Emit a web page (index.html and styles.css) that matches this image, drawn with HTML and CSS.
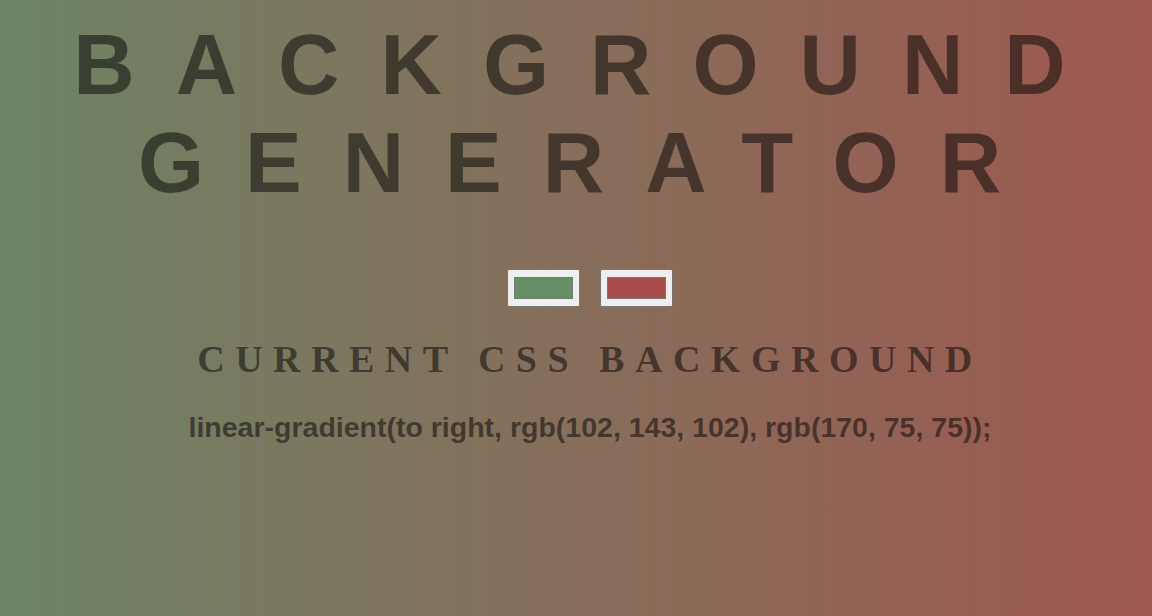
FILE: index.html
```html
<!DOCTYPE html>
<html lang="en">
<head>
<meta charset="utf-8">
<title>Background Generator</title>
<link rel="stylesheet" href="styles.css">
</head>
<body class="page">
  <h1 class="title">BACKGROUND<br>GENERATOR</h1>
  <div class="pickers">
    <input class="picker" type="color" name="color1" value="#668f66">
    <input class="picker" type="color" name="color2" value="#aa4b4b">
  </div>
  <h3 class="subtitle">CURRENT CSS BACKGROUND</h3>
  <p class="code">linear-gradient(to right, rgb(102, 143, 102), rgb(170, 75, 75));</p>
</body>
</html>
```

FILE: styles.css
```css
html {
  height: 100%;
  background: linear-gradient(to right, rgb(109, 131, 101), rgb(135, 110, 90) 50%, rgb(158, 88, 79));
}
.page {
  margin: 0;
  padding: 16px 0 0 28px;
  min-height: 100%;
  box-sizing: border-box;
  text-align: center;
  color: rgba(0, 0, 0, 0.5);
}
.title {
  margin: 0;
  font-family: "Liberation Sans", Arial, sans-serif;
  font-weight: bold;
  font-size: 85px;
  line-height: 98px;
  letter-spacing: 41px;
}
.pickers {
  display: flex;
  justify-content: center;
  gap: 20px;
  margin-top: 57px;
}
.picker {
  -webkit-appearance: none;
  appearance: none;
  width: 73px;
  height: 38px;
  padding: 0;
  margin: 0;
  border: 1px solid #767676;
  border-radius: 2px;
  background: #efefef;
  cursor: pointer;
}
.picker::-webkit-color-swatch-wrapper {
  padding: 7px 6px 7px 6px;
}
.picker::-webkit-color-swatch {
  border: 1px solid #777;
  border-radius: 0;
}
.subtitle {
  margin: 30px 0 0;
  font-family: "Liberation Serif", "Times New Roman", serif;
  font-weight: bold;
  font-size: 38px;
  line-height: 44px;
  letter-spacing: 10.5px;
}
.code {
  margin: 30px 0 0;
  font-family: "Liberation Sans", Arial, sans-serif;
  font-weight: bold;
  font-size: 28.5px;
  line-height: 33px;
}
```
